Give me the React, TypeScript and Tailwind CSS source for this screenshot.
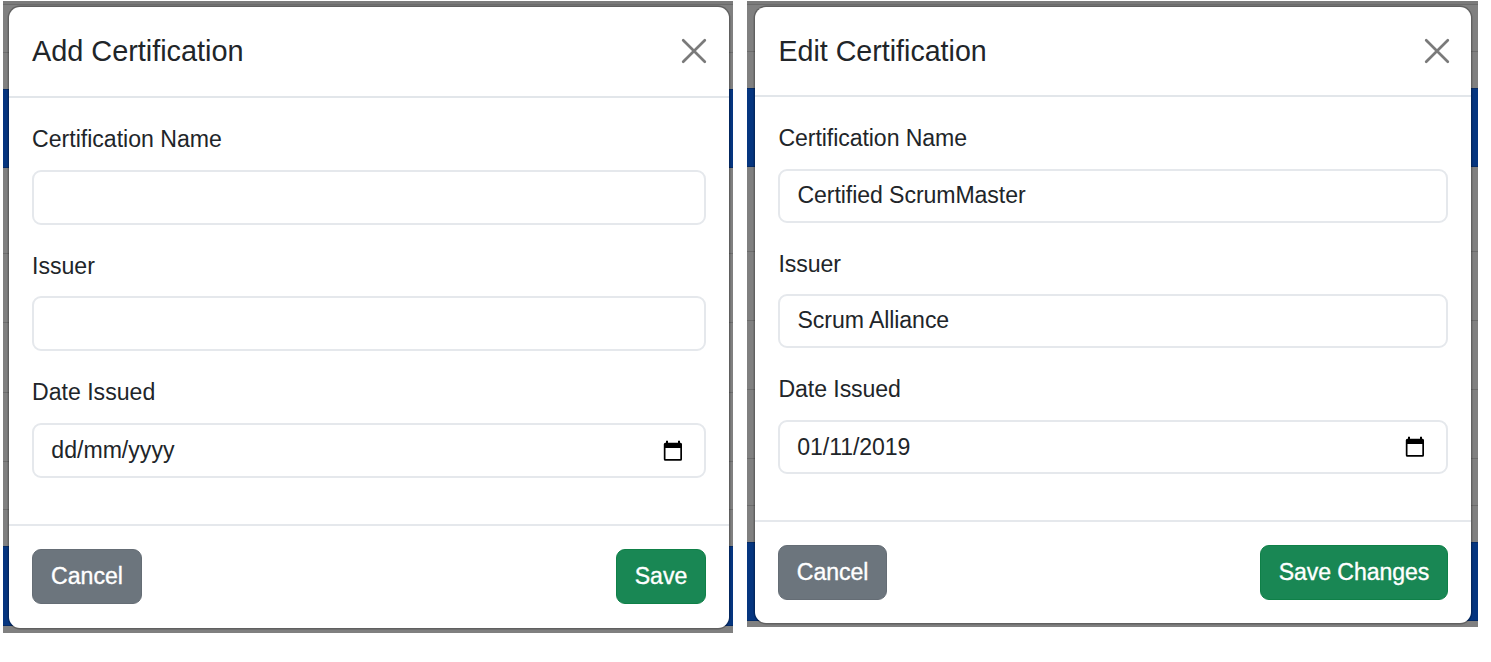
import React from "react";

interface Field {
  label: string;
  value: string;
  date?: boolean;
  labelClass: string;
  boxClass: string;
}

interface DialogProps {
  title: string;
  fields: Field[];
  saveText: string;
  frameClass: string;
  stripes: string[];
  cardClass: string;
  headerClass: string;
  titleClass: string;
  textClass: string;
  valueClass: string;
  footerClass: string;
  cancelClass: string;
  saveClass: string;
}

function CloseIcon() {
  return (
    <svg className="block" width="26" height="26" viewBox="0 0 26 26" fill="none">
      <path d="M2.2 2.2 23.8 23.8M23.8 2.2 2.2 23.8" stroke="#7a7a7a" strokeWidth="2.7" strokeLinecap="round" />
    </svg>
  );
}

function CalendarIcon() {
  return (
    <svg width="20" height="22" viewBox="0 0 20 22" className="shrink-0">
      <path
        fillRule="evenodd"
        fill="#000"
        d="M3 .8h2v1.900h10V.8h2v1.900h.6Q19 2.700 19 4.300V19.200Q19 20.800 17.500 20.800H2.300Q.8 20.800 .8 19.200V4.300Q.8 2.700 2.300 2.700H3ZM2.500 8V19H17.300V8Z"
      />
    </svg>
  );
}

function Dialog(p: DialogProps) {
  return (
    <section className={`grid overflow-hidden ${p.frameClass}`}>
      <div className="flex flex-col [grid-area:1/1]" aria-hidden="true">
        {p.stripes.map((s, i) => (
          <div key={i} className={s} />
        ))}
      </div>
      <div
        className={`flex flex-col rounded-[11px] bg-white shadow-[0_0_0_1.4px_rgba(0,0,0,0.25)] [grid-area:1/1] ${p.cardClass}`}
      >
        <header
          className={`flex shrink-0 items-center justify-between border-b-2 border-[#e2e6ea] ${p.headerClass}`}
        >
          <h2 className={`whitespace-nowrap leading-9 ${p.titleClass}`}>{p.title}</h2>
          <button aria-label="Close">
            <CloseIcon />
          </button>
        </header>
        <div className={`flex flex-1 flex-col px-[23px] ${p.textClass}`}>
          {p.fields.map((f) => (
            <React.Fragment key={f.label}>
              <div className={`h-9 leading-9 ${f.labelClass}`}>{f.label}</div>
              <div
                className={`flex shrink-0 items-center justify-between rounded-[9px] border-2 border-[#e5e8ec] pl-[17px] pr-[21.500px] ${f.boxClass}`}
              >
                <span className={f.date ? "pl-[0.300px]" : p.valueClass}>{f.value}</span>
                {f.date && <CalendarIcon />}
              </div>
            </React.Fragment>
          ))}
        </div>
        <footer
          className={`flex shrink-0 items-start justify-between border-t-2 border-[#e5e8ec] px-[23px] text-white [-webkit-text-stroke:0.35px_white] ${p.footerClass}`}
        >
          <button className={`rounded-[9px] border border-[#656d75] bg-[#6c757d] pb-px ${p.cancelClass}`}>Cancel</button>
          <button className={`rounded-[9px] border border-[#0f8048] bg-[#198754] pb-px ${p.saveClass}`}>
            {p.saveText}
          </button>
        </footer>
      </div>
    </section>
  );
}

export default function App() {
  return (
    <main className="flex h-[662px] w-[1491px] items-start bg-white pl-[3px] pt-px font-['Liberation_Sans',Arial,sans-serif] text-[#212529]">
      <Dialog
        title="Add Certification"
        saveText="Save"
        frameClass="h-[632px] w-[730px]"
        stripes={[
          "h-[4px] bg-[#7b7b7b] border-b border-[#6b6b6b]",
          "h-[48px] bg-[#808080] border-b border-[#6c6c6c]",
          "h-[36px] bg-[#808080]",
          "h-[79px] bg-[#05357f] border-y border-[#042a66]",
          "h-[86px] bg-[#808080] border-b border-[#6c6c6c]",
          "h-[69px] bg-[#808080] border-b border-[#6c6c6c]",
          "h-[70px] bg-[#808080] border-b border-[#6c6c6c]",
          "h-[69px] bg-[#808080] border-b border-[#6c6c6c]",
          "h-[48px] bg-[#808080] border-b border-[#6c6c6c]",
          "h-[36px] bg-[#808080]",
          "h-[80px] bg-[#05357f] border-y border-[#042a66]",
          "h-[7px] bg-[#808080]",
        ]}
        cardClass="ml-[6px] mt-[6px] h-[621px] w-[720px]"
        headerClass="h-[91px] pb-[2px] pl-[23px] pr-[22px]"
        titleClass="text-[28.900px] tracking-[-0.03px]"
        textClass="text-[23.100px]"
        valueClass=""
        fields={[
          { label: "Certification Name", value: "", labelClass: "mt-[23px]", boxClass: "mt-[13px] h-[55px]" },
          { label: "Issuer", value: "", labelClass: "mt-[23px]", boxClass: "mt-[12px] h-[55px]" },
          { label: "Date Issued", value: "dd/mm/yyyy", date: true, labelClass: "mt-[23px]", boxClass: "mt-[13px] h-[55px]" },
        ]}
        footerClass="h-[104px] pt-[23px] text-[23.100px]"
        cancelClass="h-[55px] w-[110px]"
        saveClass="h-[55px] w-[90px]"
      />
      <Dialog
        title="Edit Certification"
        saveText="Save Changes"
        frameClass="ml-[14px] h-[626px] w-[731px]"
        stripes={[
          "h-[4px] bg-[#7b7b7b] border-b border-[#6b6b6b]",
          "h-[47px] bg-[#808080] border-b border-[#6c6c6c]",
          "h-[36px] bg-[#808080]",
          "h-[79px] bg-[#05357f] border-y border-[#042a66]",
          "h-[85px] bg-[#808080] border-b border-[#6c6c6c]",
          "h-[69px] bg-[#808080] border-b border-[#6c6c6c]",
          "h-[69px] bg-[#808080] border-b border-[#6c6c6c]",
          "h-[69px] bg-[#808080] border-b border-[#6c6c6c]",
          "h-[47px] bg-[#808080] border-b border-[#6c6c6c]",
          "h-[36px] bg-[#808080]",
          "h-[79px] bg-[#05357f] border-y border-[#042a66]",
          "h-[6px] bg-[#808080]",
        ]}
        cardClass="ml-[8px] mt-[6px] h-[616px] w-[716px]"
        headerClass="h-[90px] pl-[23.500px] pr-[21.500px]"
        titleClass="text-[28.600px]"
        textClass="text-[23.100px] tracking-[-0.08px]"
        valueClass="pb-[2px] pl-[0.500px]"
        fields={[
          { label: "Certification Name", value: "Certified ScrumMaster", labelClass: "mt-[23px] pl-[0.500px]", boxClass: "mt-[13px] h-[54px]" },
          { label: "Issuer", value: "Scrum Alliance", labelClass: "mt-[23px] pl-[0.500px]", boxClass: "mt-[12px] h-[54px]" },
          { label: "Date Issued", value: "01/11/2019", date: true, labelClass: "mt-[23px] pl-[0.500px]", boxClass: "mt-[13px] h-[54px]" },
        ]}
        footerClass="h-[103px] pt-[23px] text-[23.100px] tracking-[-0.08px]"
        cancelClass="h-[55px] w-[109px]"
        saveClass="h-[55px] w-[188px]"
      />
    </main>
  );
}
